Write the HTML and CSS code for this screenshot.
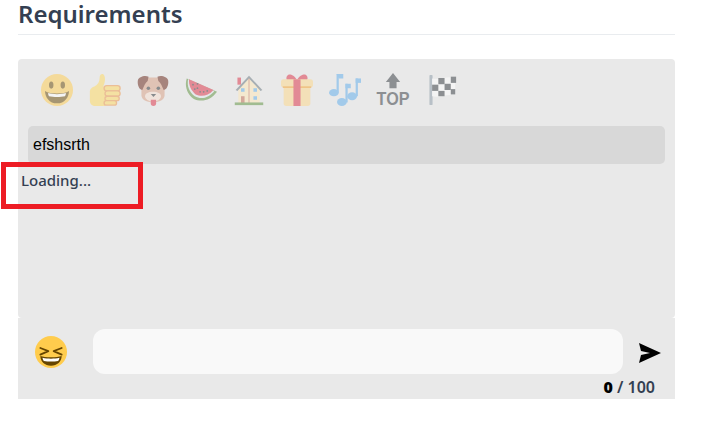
FILE: index.html
```html
<!DOCTYPE html>
<html lang="en">
<head>
  <meta charset="UTF-8" />
  <title>Requirements</title>
  <link rel="stylesheet" href="styles.css">
</head>
<body>
  <div class="page">
    <h2 class="title">Requirements</h2>

    <div class="picker">
      <!-- Emoji categories -->
      <div class="tabs">
        <svg class="tab" viewBox="0 0 36 36"><circle cx="18" cy="18" r="18" fill="#FFCC4D"/><ellipse cx="11.5" cy="12.5" rx="2.5" ry="4" fill="#664500"/><ellipse cx="24.5" cy="12.5" rx="2.5" ry="4" fill="#664500"/><path d="M4.500 19c3 2 8 2.800 13.500 2.800S28.500 21 31.500 19c0 7-5 14-13.500 14S4.500 26 4.500 19z" fill="#664500"/><path d="M8 21.500c3 .8 6.500 1.200 10 1.200s7-.4 10-1.200c0 1.500-.5 3-1 3.500-5 1-13 1-18 0-.5-.5-1-2-1-3.500z" fill="#fff"/></svg>
        <svg class="tab" viewBox="0 0 36 36"><path d="M1 19c0-2 2-4 5-5 4-1.500 6-5 6-10 0-2 1-4 3-4s3 3 3 6-1 6-2 8h2v22H7c-3 0-6-2-6-6V19z" fill="#FFDB5E"/><rect x="17" y="13" width="18" height="6" rx="3" fill="#FFDB5E" stroke="#EE9547" stroke-width="1.500"/><rect x="18" y="19" width="17" height="6" rx="3" fill="#FFDB5E" stroke="#EE9547" stroke-width="1.500"/><rect x="18" y="25" width="16" height="5" rx="2.500" fill="#FFDB5E" stroke="#EE9547" stroke-width="1.500"/><rect x="17" y="30" width="14" height="5" rx="2.500" fill="#FFDB5E" stroke="#EE9547" stroke-width="1.500"/></svg>
        <svg class="tab" viewBox="0 0 36 36"><path d="M10 4h16l5 10v10c0 5-6 8-13 8S5 29 5 24V14z" fill="#D99E82"/><path d="M9 25c0-3 4-5 9-5s9 2 9 5-4 6-9 6-9-3-9-6z" fill="#F7DECE"/><path d="M1 7c1-4 8-6 12-4l-1 5c-3 2-4 6-6 10-3 0-6-5-5-11zM35 7c-1-4-8-6-12-4l1 5c3 2 4 6 6 10 3 0 6-5 5-11z" fill="#662113"/><circle cx="12.800" cy="16" r="2" fill="#292F33"/><circle cx="24" cy="16" r="2" fill="#292F33"/><path d="M15.500 22.500h6L18.500 26z" fill="#292F33"/><path d="M15.500 29h6v4a3 3 0 0 1-6 0z" fill="#DD2E44"/></svg>
        <svg class="tab" viewBox="0 0 36 36"><path d="M2 5C-1 14 3 24 10 28c8 4 19 2 26-8z" fill="#5C913B"/><path d="M3.500 6C2 14 5 21 11 25c7 4 16 2 22-6z" fill="#E1E8ED"/><path d="M4.500 6C4 13 7 19 12 23c6 3 14 2 20-5z" fill="#DD2E44"/><g fill="#292F33"><circle cx="9" cy="12" r="1"/><circle cx="14" cy="16" r="1"/><circle cx="11" cy="17" r="1"/><circle cx="17" cy="20" r="1"/><circle cx="21" cy="20" r="1"/><circle cx="14" cy="11" r="1"/><circle cx="25" cy="19" r="1"/></g></svg>
        <svg class="tab" viewBox="0 0 36 36"><path d="M5 4h4v8H5z" fill="#DD2E44"/><path d="M6 17L18 5l12 12v16H6z" fill="#FFE8B6"/><path d="M3 18L18 2l15 16-2 1L18 5 5 19z" fill="#66757F"/><path d="M18 5v28" stroke="#C1694F" stroke-width="1"/><rect x="9" y="16" width="4" height="4" fill="#5DADEC"/><rect x="23" y="16" width="4" height="4" fill="#5DADEC"/><rect x="23" y="25" width="4" height="4" fill="#5DADEC"/><rect x="9" y="25" width="4" height="8" fill="#C1694F"/><rect x="2" y="32" width="32" height="3" fill="#5C913B"/></svg>
        <svg class="tab" viewBox="0 0 36 36"><path d="M18 7C15 1 10 0 8 1s-3 5 0 7h20c3-2 2-6 0-7s-7 0-10 6z" fill="#DD2E44"/><rect x="3" y="10" width="30" height="26" rx="3" fill="#FDD888"/><rect x="0" y="6" width="36" height="9" rx="3" fill="#FDD888"/><rect x="2" y="14" width="32" height="1.500" fill="#F4900C"/><rect x="14" y="6" width="8" height="30" fill="#DD2E44"/></svg>
        <svg class="tab" viewBox="0 0 36 36"><g fill="#5DADEC"><rect x="8.500" y="0" width="2.500" height="21"/><path d="M8.500 0h7.500v5h-5z"/><ellipse cx="5.500" cy="21" rx="5.500" ry="4"/><rect x="18.500" y="11" width="2.500" height="21"/><path d="M18.500 11h6v5h-6z"/><ellipse cx="14.500" cy="31.500" rx="5.500" ry="4.500"/><rect x="30" y="5" width="2.500" height="20"/><path d="M30 5h6v5h-6z"/><ellipse cx="26" cy="25" rx="5.500" ry="4.500"/></g></svg>
        <svg class="tab" viewBox="0 0 36 36"><path d="M18-1l8 10h-4v7h-8V9h-4z" fill="#31373D"/><text class="top-label" x="18" y="35" text-anchor="middle" textLength="37" lengthAdjust="spacingAndGlyphs">TOP</text></svg>
        <svg class="tab" viewBox="0 0 36 36"><rect x="5" y="1" width="3.500" height="34" rx="1" fill="#8899A6"/><path d="M8 5c8 2 16-3 26-1v20c-10-2-17 3-26 1z" fill="#fff"/><g fill="#31373D"><path d="M15 4.500h7v7h-7z"/><path d="M29 3h6v7h-6z"/><path d="M8 12h7v7H8z"/><path d="M22 11h7v7h-7z"/><path d="M15 19h7v6h-7z"/><path d="M29 17h5v6h-5z"/></g></svg>
      </div>

      <div class="search">efshsrth</div>
      <p class="loading">Loading...</p>
    </div>

    <div class="composer">
      <div class="composer-row">
        <svg class="laugh" viewBox="0 0 36 36"><circle cx="18" cy="18" r="18" fill="#FFCC4D"/><path d="M6 13.500l9 3.500-9 4M30 13.500L21 17l9 4" fill="none" stroke="#664500" stroke-width="2" stroke-linecap="round" stroke-linejoin="round"/><path d="M6 22.500c3 1 7 1.500 12 1.500s9-.5 12-1.500c0 6-5 11-12 11S6 28.500 6 22.500z" fill="#664500"/><path d="M8.500 24.500c3 .7 6 1 9.500 1s6.500-.3 9.500-1c0 1.200-.5 2.500-1.500 3.500-5 .8-11 .8-16 0-1-1-1.500-2.300-1.500-3.500z" fill="#fff"/></svg>
        <input class="message" type="text" />
        <svg class="send" viewBox="0 0 24 24"><path d="M1 2l22 10L1 22l2-8 9-2-9-2z" fill="#000"/></svg>
      </div>
      <div class="counter"><b>0</b> / 100</div>
    </div>

    <!-- Annotation drawn on the screenshot -->
    <div class="highlight"></div>
  </div>
</body>
</html>
```

FILE: styles.css
```css
body {
  margin: 0;
  background-color: #fff;
  font-family: "Noto Sans", sans-serif;
  color: #343f52;
}

.page {
  position: relative;
  padding: 0 29px 0 18px;
}

.title {
  margin: 0 0 24px;
  height: 34px;
  border-bottom: 1px solid #e9ecef;
  font-size: 24px;
  line-height: 28px;
  font-weight: 600;
  color: #343f52;
}

.picker {
  height: 259px;
  box-sizing: border-box;
  padding: 15px 10px 0;
  background-color: #e9e9e9;
  border-radius: 4px;
}

.tabs {
  display: flex;
  gap: 16px;
  padding-left: 13px;
  margin-bottom: 20px;
}

.tab {
  width: 32px;
  height: 32px;
  opacity: 0.5;
  overflow: visible;
}

.top-label {
  font-family: "Liberation Sans", sans-serif;
  font-size: 20px;
  font-weight: 700;
  fill: #31373d;
}

.search {
  height: 38px;
  padding-left: 5px;
  background-color: #d8d8d8;
  border-radius: 5px;
  font-family: "Liberation Sans", sans-serif;
  font-size: 16px;
  line-height: 38px;
  color: #000;
}

.loading {
  margin: 6px 0 0 -7px;
  font-size: 15px;
  line-height: 20px;
  font-weight: 500;
}

.composer {
  height: 81px;
  background-color: #e9e9e9;
}

.composer-row {
  display: flex;
  align-items: center;
  padding: 11px 13px 0 17px;
}

.laugh {
  width: 32px;
  height: 32px;
  margin-right: 26px;
}

.message {
  flex: 1;
  height: 45px;
  box-sizing: border-box;
  border: none;
  border-radius: 12px;
  background-color: #f9f9f9;
}

.send {
  width: 24px;
  height: 24px;
  margin: 3px 0 0 15px;
}

.counter {
  margin-top: 3px;
  padding-right: 20px;
  text-align: right;
  font-size: 16px;
  line-height: 20px;
  font-weight: 600;
}

.counter b {
  color: #000;
}

.highlight {
  position: absolute;
  left: 1px;
  top: 162px;
  width: 132px;
  height: 37px;
  border: 5px solid #ed1c24;
}
```
